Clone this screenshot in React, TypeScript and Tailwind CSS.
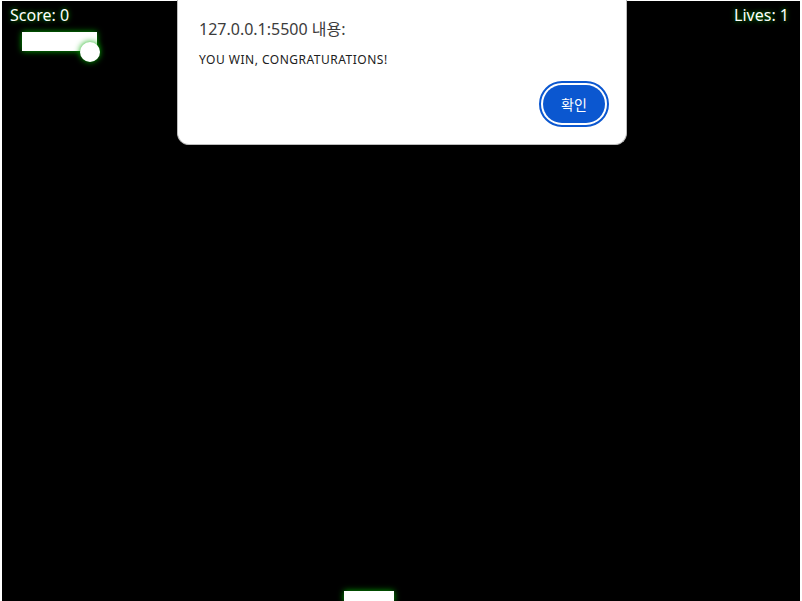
const font = { fontFamily: '"Noto Sans", "Noto Sans CJK KR", sans-serif' };

function GameCanvas() {
  return (
    <div className="relative ml-[2px] mt-[1px] h-[600px] w-[798px] overflow-hidden bg-black">
      <div className="flex justify-between pl-[8px] pr-[11px] pt-[4px] text-[16px] leading-[20px] text-white [text-shadow:0_0_5px_#0a0]">
        <span>Score: 0</span>
        <span>Lives: 1</span>
      </div>
      {/* brick */}
      <div className="absolute left-[20px] top-[31px] h-[19px] w-[75px] bg-white shadow-[0_0_6px_#0a0]" />
      {/* ball */}
      <div className="absolute left-[78px] top-[41px] h-[20px] w-[20px] rounded-full bg-white shadow-[0_0_6px_#0a0]" />
      {/* paddle */}
      <div className="absolute left-[342px] top-[590px] h-[12px] w-[50px] bg-white shadow-[0_0_6px_#0a0]" />
    </div>
  );
}

function AlertBox() {
  return (
    <div className="absolute left-[177px] top-0 flex h-[145px] w-[450px] flex-col rounded-b-[12px] border border-t-0 border-[#bdbdbd] bg-white pl-[21px] pr-[17px] pt-[17px] shadow-[0_2px_6px_rgba(0,0,0,0.3)]">
      <div className="text-[16px] leading-[24px] text-[#3c3c3c]">127.0.0.1:5500 내용:</div>
      <div className="mt-[11px] text-[12px] leading-[16px] tracking-[0.5px] text-[#202020]">
        YOU WIN, CONGRATURATIONS!
      </div>
      <div className="mt-[13px] flex justify-end">
        <button className="flex h-[46px] w-[70px] items-center justify-center rounded-full border-2 border-[#0b57d0] bg-white p-[2px]">
          <span className="flex h-full w-full items-center justify-center rounded-full bg-[#0b57d0] text-[14px] text-white">
            확인
          </span>
        </button>
      </div>
    </div>
  );
}

export default function App() {
  return (
    <div className="relative h-[601px] w-[802px] overflow-hidden bg-white" style={font}>
      <GameCanvas />
      <AlertBox />
    </div>
  );
}
